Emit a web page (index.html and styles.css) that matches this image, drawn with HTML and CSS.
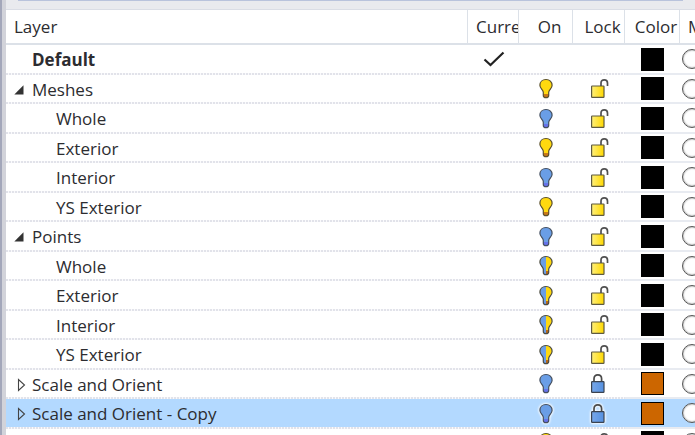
FILE: index.html
```
<!DOCTYPE html>
<html lang="en">
<head>
<meta charset="utf-8">
<title>Layers</title>
<link rel="stylesheet" href="styles.css">
</head>
<body>
<svg class="defs" aria-hidden="true">
  <defs>
    <linearGradient id="gold"><stop offset="0" stop-color="#fff07a"/><stop offset="1" stop-color="#ffd800"/></linearGradient>
    <linearGradient id="blue"><stop offset="0" stop-color="#78a8ea"/><stop offset="1" stop-color="#5590e0"/></linearGradient>
    <path id="bulb-shape" d="M8 1.500C4.400 1.500 1.900 3.900 1.900 7.200c0 3.100 2.900 4.300 3.400 7v3.200c0 1.500.9 2.200 2.700 2.200s2.700-.7 2.700-2.200v-3.200c.5-2.700 3.400-3.900 3.400-7C14.100 3.900 11.600 1.500 8 1.500z"/>
    <clipPath id="left"><rect width="8" height="21"/></clipPath>
    <clipPath id="foot"><rect y="16" width="16" height="3"/></clipPath>
    <symbol id="bulb-on" viewBox="0 0 16 21"><use href="#bulb-shape" fill="#ffd90f"/><use href="#bulb-shape" fill="#c87818" clip-path="url(#foot)"/><use href="#bulb-shape" fill="none" stroke="#5a5030" stroke-width="1.200"/></symbol>
    <symbol id="bulb-off" viewBox="0 0 16 21"><use href="#bulb-shape" fill="#6a9ee6"/><use href="#bulb-shape" fill="#6672ea" clip-path="url(#foot)"/><use href="#bulb-shape" fill="none" stroke="#46505f" stroke-width="1.200"/></symbol>
    <symbol id="bulb-half" viewBox="0 0 16 21"><use href="#bulb-shape" fill="#ffd90f"/><use href="#bulb-shape" fill="#b86818" clip-path="url(#foot)"/><use href="#bulb-shape" fill="#6a9ee6" clip-path="url(#left)"/><use href="#bulb-shape" fill="none" stroke="#4c4c44" stroke-width="1.200"/></symbol>
    <symbol id="unlocked" viewBox="0 0 20 21"><rect x="2.600" y="8" width="12.400" height="11.400" rx=".6" fill="url(#gold)" stroke="#5e5a40" stroke-width="1.200"/><path d="M12 8V5C12 2.800 13.300 1.800 15.200 1.800s3.300 1 3.300 3.100V8" fill="none" stroke="#505050" stroke-width="1.700"/></symbol>
    <symbol id="locked" viewBox="0 0 20 21"><path d="M5 9V5.800C5 3.200 6.500 1.900 8.800 1.900s3.800 1.300 3.800 3.900V9" fill="none" stroke="#4a4a4a" stroke-width="1.700"/><rect x="2.600" y="8.600" width="12.400" height="10.800" rx=".6" fill="url(#blue)" stroke="#3b4350" stroke-width="1.200"/></symbol>
    <symbol id="check" viewBox="0 0 22 16"><path d="M1.500 8.500 7.500 14 20.500 1.500" fill="none" stroke="#222" stroke-width="2.200"/></symbol>
    <symbol id="open" viewBox="0 0 10 10"><path d="M9.500.3V9.500H.3z" fill="#333"/></symbol>
    <symbol id="closed" viewBox="0 0 10 14"><path d="M1.500 1.500v11l6-5.500z" fill="none" stroke="#444" stroke-width="1.100"/></symbol>
  </defs>
</svg>
<main class="panel">
  <div class="toolbar"></div>
  <table class="layers">
    <colgroup><col><col class="c-current"><col class="c-on"><col class="c-lock"><col class="c-color"><col class="c-material"></colgroup>
    <thead>
      <tr><th scope="col" class="name">Layer</th><th scope="col" class="name">Curre</th><th scope="col">On</th><th scope="col">Lock</th><th scope="col">Color</th><th scope="col" class="name">M</th></tr>
    </thead>
    <tbody>
      <tr><td class="name strong">Default</td><td class="current"><svg class="check"><use href="#check"/></svg></td><td></td><td></td><td><button class="swatch" aria-label="Color"></button></td><td class="mat"><button class="material" aria-label="Material"></button></td></tr>
      <tr><td class="name"><button class="twisty" aria-label="Collapse"><svg class="open"><use href="#open"/></svg></button>Meshes</td><td></td><td><button class="icon" aria-label="On"><svg class="bulb"><use href="#bulb-on"/></svg></button></td><td><button class="icon" aria-label="Unlocked"><svg class="lock"><use href="#unlocked"/></svg></button></td><td><button class="swatch" aria-label="Color"></button></td><td class="mat"><button class="material" aria-label="Material"></button></td></tr>
      <tr><td class="name child">Whole</td><td></td><td><button class="icon" aria-label="Off"><svg class="bulb"><use href="#bulb-off"/></svg></button></td><td><button class="icon" aria-label="Unlocked"><svg class="lock"><use href="#unlocked"/></svg></button></td><td><button class="swatch" aria-label="Color"></button></td><td class="mat"><button class="material" aria-label="Material"></button></td></tr>
      <tr><td class="name child">Exterior</td><td></td><td><button class="icon" aria-label="On"><svg class="bulb"><use href="#bulb-on"/></svg></button></td><td><button class="icon" aria-label="Unlocked"><svg class="lock"><use href="#unlocked"/></svg></button></td><td><button class="swatch" aria-label="Color"></button></td><td class="mat"><button class="material" aria-label="Material"></button></td></tr>
      <tr><td class="name child">Interior</td><td></td><td><button class="icon" aria-label="Off"><svg class="bulb"><use href="#bulb-off"/></svg></button></td><td><button class="icon" aria-label="Unlocked"><svg class="lock"><use href="#unlocked"/></svg></button></td><td><button class="swatch" aria-label="Color"></button></td><td class="mat"><button class="material" aria-label="Material"></button></td></tr>
      <tr><td class="name child">YS Exterior</td><td></td><td><button class="icon" aria-label="On"><svg class="bulb"><use href="#bulb-on"/></svg></button></td><td><button class="icon" aria-label="Unlocked"><svg class="lock"><use href="#unlocked"/></svg></button></td><td><button class="swatch" aria-label="Color"></button></td><td class="mat"><button class="material" aria-label="Material"></button></td></tr>
      <tr><td class="name"><button class="twisty" aria-label="Collapse"><svg class="open"><use href="#open"/></svg></button>Points</td><td></td><td><button class="icon" aria-label="Off"><svg class="bulb"><use href="#bulb-off"/></svg></button></td><td><button class="icon" aria-label="Unlocked"><svg class="lock"><use href="#unlocked"/></svg></button></td><td><button class="swatch" aria-label="Color"></button></td><td class="mat"><button class="material" aria-label="Material"></button></td></tr>
      <tr><td class="name child">Whole</td><td></td><td><button class="icon" aria-label="On when parent is on"><svg class="bulb"><use href="#bulb-half"/></svg></button></td><td><button class="icon" aria-label="Unlocked"><svg class="lock"><use href="#unlocked"/></svg></button></td><td><button class="swatch" aria-label="Color"></button></td><td class="mat"><button class="material" aria-label="Material"></button></td></tr>
      <tr><td class="name child">Exterior</td><td></td><td><button class="icon" aria-label="On when parent is on"><svg class="bulb"><use href="#bulb-half"/></svg></button></td><td><button class="icon" aria-label="Unlocked"><svg class="lock"><use href="#unlocked"/></svg></button></td><td><button class="swatch" aria-label="Color"></button></td><td class="mat"><button class="material" aria-label="Material"></button></td></tr>
      <tr><td class="name child">Interior</td><td></td><td><button class="icon" aria-label="On when parent is on"><svg class="bulb"><use href="#bulb-half"/></svg></button></td><td><button class="icon" aria-label="Unlocked"><svg class="lock"><use href="#unlocked"/></svg></button></td><td><button class="swatch" aria-label="Color"></button></td><td class="mat"><button class="material" aria-label="Material"></button></td></tr>
      <tr><td class="name child">YS Exterior</td><td></td><td><button class="icon" aria-label="On when parent is on"><svg class="bulb"><use href="#bulb-half"/></svg></button></td><td><button class="icon" aria-label="Unlocked"><svg class="lock"><use href="#unlocked"/></svg></button></td><td><button class="swatch" aria-label="Color"></button></td><td class="mat"><button class="material" aria-label="Material"></button></td></tr>
      <tr><td class="name"><button class="twisty" aria-label="Expand"><svg class="closed"><use href="#closed"/></svg></button>Scale and Orient</td><td></td><td><button class="icon" aria-label="Off"><svg class="bulb"><use href="#bulb-off"/></svg></button></td><td><button class="icon" aria-label="Locked"><svg class="lock"><use href="#locked"/></svg></button></td><td><button class="swatch orange" aria-label="Color"></button></td><td class="mat"><button class="material" aria-label="Material"></button></td></tr>
      <tr class="selected"><td class="name"><button class="twisty" aria-label="Expand"><svg class="closed"><use href="#closed"/></svg></button>Scale and Orient - Copy</td><td></td><td><button class="icon" aria-label="Off"><svg class="bulb"><use href="#bulb-off"/></svg></button></td><td><button class="icon" aria-label="Locked"><svg class="lock"><use href="#locked"/></svg></button></td><td><button class="swatch orange" aria-label="Color"></button></td><td class="mat"><button class="material" aria-label="Material"></button></td></tr>
      <tr><td></td><td></td><td><button class="icon" aria-label="On"><svg class="bulb"><use href="#bulb-on"/></svg></button></td><td><button class="icon" aria-label="Unlocked"><svg class="lock"><use href="#unlocked"/></svg></button></td><td><button class="swatch" aria-label="Color"></button></td><td class="mat"><button class="material" aria-label="Material"></button></td></tr>
    </tbody>
  </table>
</main>
</body>
</html>
```
FILE: styles.css
```
* { box-sizing: border-box; }
body {
  margin: 0;
  background: #fff;
  color: #2c2c30;
  font: 17px/24px "Open Sans", sans-serif;
}
.defs { position: absolute; width: 0; height: 0; }
.panel {
  height: 100vh;
  overflow: hidden;
  border-left: 2px solid #a3a7ba;
  box-shadow: inset 4px 0 #d2d3da;
  padding-left: 4px;
}
.toolbar {
  height: 10px;
  background: #e9eaee;
  border-bottom: 1px solid #dadde5;
}
.toolbar::before {
  content: "";
  display: block;
  height: 1px;
  margin: 0 12px;
  background: #b9c3dc;
}
.layers {
  width: calc(100% + 40px);
  table-layout: fixed;
  border-collapse: separate;
  border-spacing: 0;
}
.c-current { width: 51px; }
.c-on { width: 54px; }
.c-lock { width: 52px; }
.c-color, .c-material { width: 55px; }
th, td { padding: 0; text-align: center; vertical-align: middle; white-space: nowrap; }
th {
  height: 35px;
  padding-left: 8px;
  font-weight: 400;
  border-right: 1px solid #dce1e8;
  border-bottom: 2px solid #dce1e8;
}
th.name { text-align: left; overflow: hidden; }
td {
  height: 30px;
  padding-bottom: 2px;
  background: repeating-linear-gradient(90deg, #e2e3ea 0 2px, #fafafc 2px 3px) left bottom / 100% 2px no-repeat;
}
td:nth-child(n + 5) {
  background-image: linear-gradient(#e8ebf1, #e8ebf1);
}
tr:nth-child(even) td { height: 29px; }
td.name { text-align: left; padding: 0 0 0 26px; }
td.child { padding-left: 50px; }
.strong { font-weight: 700; }
.layers .selected td { background-color: #b3d9ff; }
button { padding: 0; border: 0; background: none; }
.twisty { width: 18px; height: 14px; margin-left: -18px; text-align: left; vertical-align: -1px; }
.twisty svg, .icon svg, .check { display: block; }
.open { width: 10px; height: 10px; }
.closed { width: 10px; height: 14px; margin-left: 3px; }
.check { width: 22px; height: 16px; margin: 0 auto; }
.icon { display: block; margin: 0 auto; }
.bulb { width: 16px; height: 21px; }
.lock { width: 20px; height: 21px; }
.selected .icon { filter: drop-shadow(0 0 1px #fff) drop-shadow(0 0 1px #fff); }
.swatch {
  display: block;
  width: 23px;
  height: 23px;
  margin: 0 auto;
  background: #000;
  border: 1px solid #000;
}
.orange { background: #cc6600; }
.material {
  display: block;
  width: 20px;
  height: 20px;
  margin-left: 2px;
  border: 1px solid #555;
  border-radius: 50%;
  background: #fff;
  box-shadow: inset 0 0 2px #777;
}
```
